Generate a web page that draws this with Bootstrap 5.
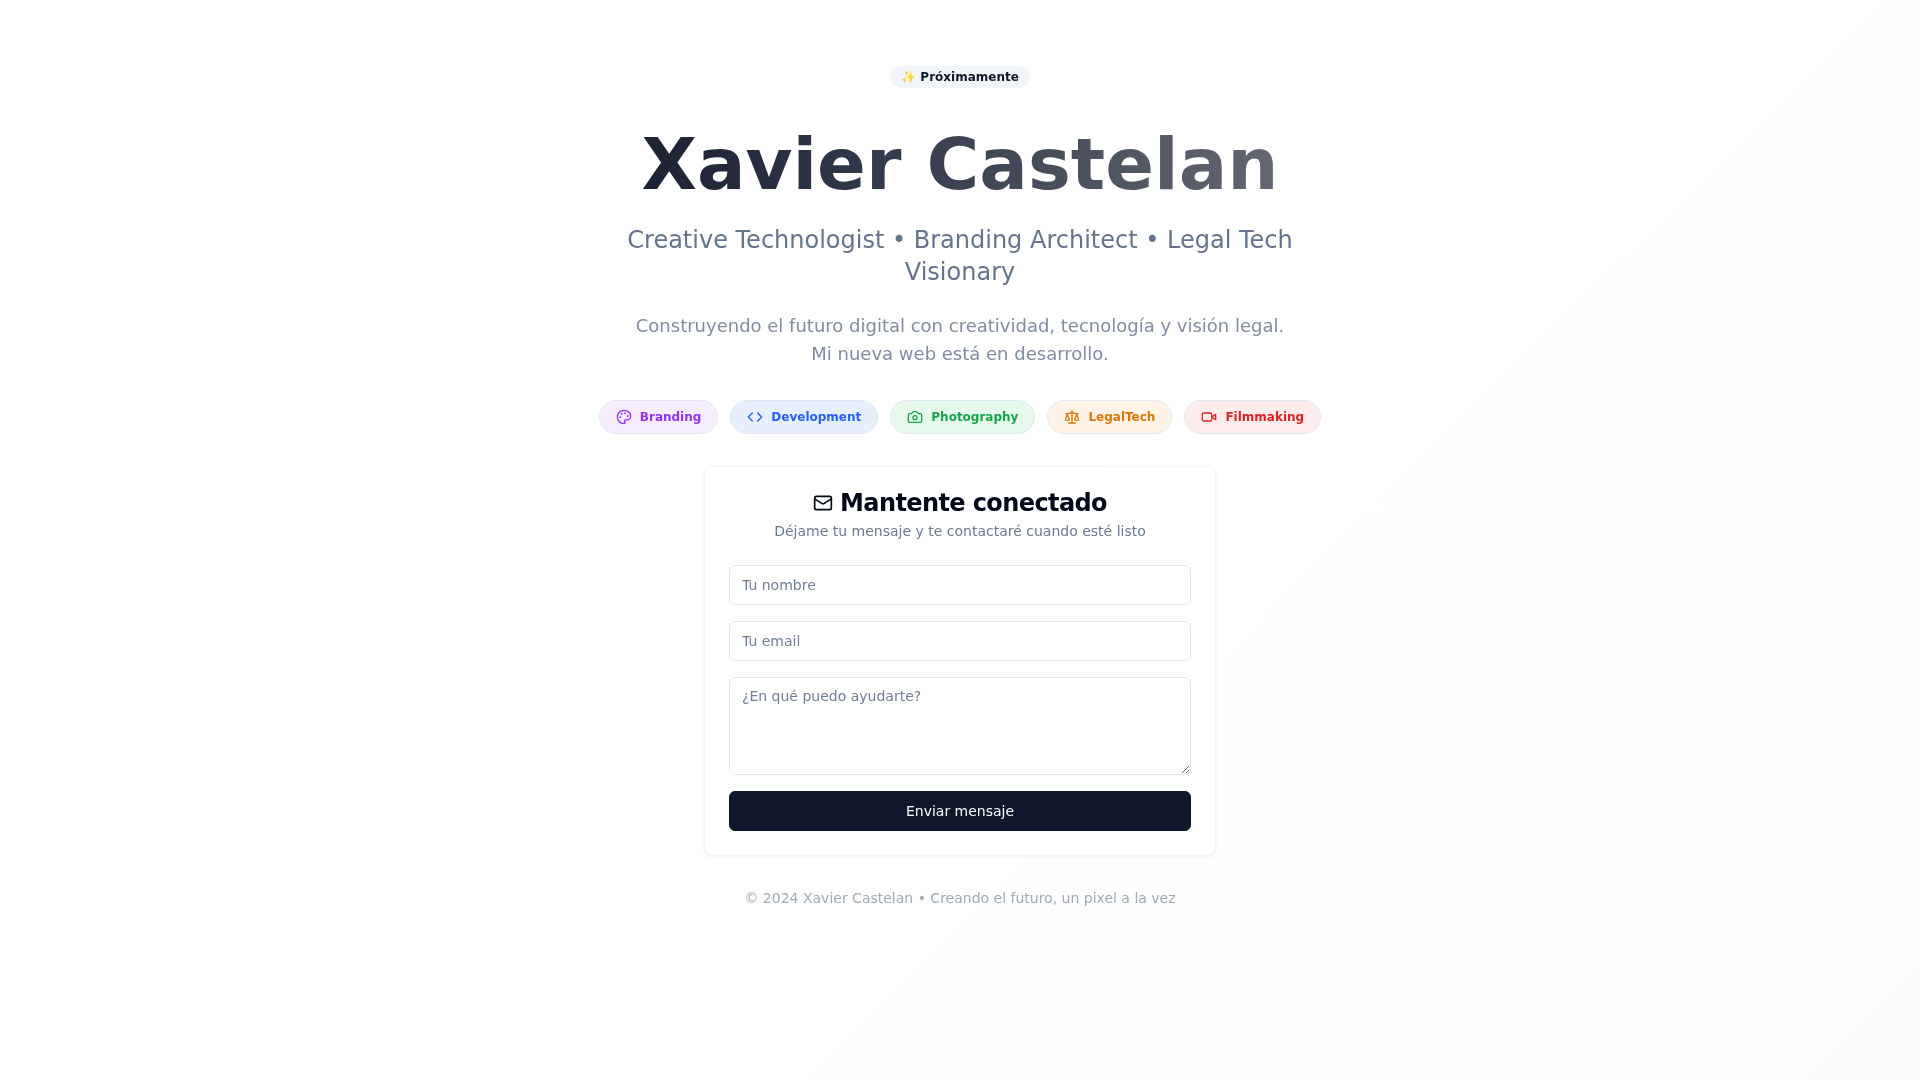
<!doctype html>
<html lang="es">
<head>
<meta charset="utf-8">
<title>Xavier Castelan</title>
<link href="https://cdn.jsdelivr.net/npm/bootstrap@5.3.0/dist/css/bootstrap.min.css" rel="stylesheet">
<style>
html, body { height: 100%; }
body {
  font-family: "DejaVu Sans", sans-serif;
  background: linear-gradient(135deg, #ffffff 0%, #ffffff 50%, #fbfcfd 100%);
  color: #0f172a;
  min-height: 1080px;
}
.page-wrap { padding-top: 66px; max-width: 896px; will-change: opacity; }
.soon-pill { background: #f1f5f9; color: #0f172a; font-size: 12px; font-weight: 700; line-height: 16px; padding: 3px 11px; border-radius: 999px; }
.hero-title {
  font-size: 72px; font-weight: 700; line-height: 72px; margin: 40px 0 24px; letter-spacing: 0;
  background: linear-gradient(90deg, #1c2233 0%, #2a3144 25%, #636772 100%);
  -webkit-background-clip: text; background-clip: text; color: transparent;
}
.hero-tag { font-size: 24px; line-height: 32px; color: #64748b; margin-bottom: 24px; max-width: 672px; }
.hero-desc { font-size: 18px; line-height: 28px; color: #808ca0; margin-bottom: 32px; max-width: 672px; }
.skill-row { gap: 12px; }
.skill-pill { display: inline-flex; align-items: center; gap: 8px; height: 34px; padding: 0 16px; border: 1px solid #e2e8f0; border-radius: 999px; font-size: 12px; font-weight: 700; line-height: 16px; }
.skill-pill svg { width: 16px; height: 16px; }
.tone-purple { background: #f5ecfe; color: #9333ea; }
.tone-blue { background: #e8effc; color: #2563eb; }
.tone-green { background: #e6f8ec; color: #16a34a; }
.tone-orange { background: #fef3e6; color: #d97706; }
.tone-red { background: #feebec; color: #dc2626; }
.contact-card { width: 512px; border: 1px solid #f1f5f9; border-radius: 8px; box-shadow: 0 1px 3px rgba(15,23,42,.06); padding: 24px; margin-top: 32px; background: #fff; }
.contact-title { font-size: 24px; font-weight: 700; line-height: 24px; letter-spacing: -.6px; color: #020817; margin: 0; }
.contact-title svg { width: 20px; height: 20px; margin-right: 7px; vertical-align: -2px; }
.contact-sub { font-size: 14px; line-height: 20px; color: #6b7a90; margin: 6px 0 24px; }
.contact-card .form-control { font-size: 14px; line-height: 20px; height: 40px; padding: 8px 12px; border: 1px solid #e2e8f0; border-radius: 6px; color: #0f172a; background: #fff; }
.contact-card .form-control::placeholder { color: #717f95; opacity: 1; }
.contact-card textarea.form-control { height: 98px; min-height: 80px; }
.send-btn { height: 40px; background: #0f172a; border-color: #0f172a; color: #f8fafc; font-size: 14px; font-weight: 400; border-radius: 6px; }
.foot-note { font-size: 14px; line-height: 20px; color: #a0aab8; margin: 32px 0 0; }
</style>
</head>
<body>
<main class="container page-wrap d-flex flex-column align-items-center text-center">
  <span class="soon-pill">✨ Próximamente</span>
  <h1 class="hero-title">Xavier Castelan</h1>
  <p class="hero-tag">Creative Technologist • Branding Architect • Legal Tech Visionary</p>
  <p class="hero-desc">Construyendo el futuro digital con creatividad, tecnología y visión legal.<br>Mi nueva web está en desarrollo.</p>
  <div class="d-flex justify-content-center skill-row">
    <span class="skill-pill tone-purple"><svg viewBox="0 0 24 24" fill="none" stroke="currentColor" stroke-width="2" stroke-linecap="round" stroke-linejoin="round"><circle cx="13.5" cy="6.5" r=".5" fill="currentColor"/><circle cx="17.5" cy="10.5" r=".5" fill="currentColor"/><circle cx="8.5" cy="7.5" r=".5" fill="currentColor"/><circle cx="6.5" cy="12.5" r=".5" fill="currentColor"/><path d="M12 2C6.5 2 2 6.5 2 12s4.5 10 10 10c.926 0 1.648-.746 1.648-1.688 0-.437-.18-.835-.437-1.125-.29-.289-.438-.652-.438-1.125a1.64 1.64 0 0 1 1.668-1.668h1.996c3.051 0 5.555-2.503 5.555-5.554C21.965 6.012 17.461 2 12 2z"/></svg>Branding</span>
    <span class="skill-pill tone-blue"><svg viewBox="0 0 24 24" fill="none" stroke="currentColor" stroke-width="2" stroke-linecap="round" stroke-linejoin="round"><polyline points="16 18 22 12 16 6"/><polyline points="8 6 2 12 8 18"/></svg>Development</span>
    <span class="skill-pill tone-green"><svg viewBox="0 0 24 24" fill="none" stroke="currentColor" stroke-width="2" stroke-linecap="round" stroke-linejoin="round"><path d="M14.5 4h-5L7 7H4a2 2 0 0 0-2 2v9a2 2 0 0 0 2 2h16a2 2 0 0 0 2-2V9a2 2 0 0 0-2-2h-3l-2.5-3z"/><circle cx="12" cy="13" r="3"/></svg>Photography</span>
    <span class="skill-pill tone-orange"><svg viewBox="0 0 24 24" fill="none" stroke="currentColor" stroke-width="2" stroke-linecap="round" stroke-linejoin="round"><path d="m16 16 3-8 3 8c-.87.65-1.92 1-3 1s-2.13-.35-3-1Z"/><path d="m2 16 3-8 3 8c-.87.65-1.92 1-3 1s-2.13-.35-3-1Z"/><path d="M7 21h10"/><path d="M12 3v18"/><path d="M3 7h2c2 0 5-1 7-2 2 1 5 2 7 2h2"/></svg>LegalTech</span>
    <span class="skill-pill tone-red"><svg viewBox="0 0 24 24" fill="none" stroke="currentColor" stroke-width="2" stroke-linecap="round" stroke-linejoin="round"><path d="m22 8-6 4 6 4V8Z"/><rect x="2" y="6" width="14" height="12" rx="2" ry="2"/></svg>Filmmaking</span>
  </div>
  <section class="contact-card">
    <h2 class="contact-title"><svg viewBox="0 0 24 24" fill="none" stroke="currentColor" stroke-width="2" stroke-linecap="round" stroke-linejoin="round"><rect x="2" y="4" width="20" height="16" rx="2"/><path d="m22 7-8.97 5.7a1.94 1.94 0 0 1-2.06 0L2 7"/></svg>Mantente conectado</h2>
    <p class="contact-sub">Déjame tu mensaje y te contactaré cuando esté listo</p>
    <form class="d-flex flex-column gap-3">
      <input class="form-control" type="text" placeholder="Tu nombre">
      <input class="form-control" type="email" placeholder="Tu email">
      <textarea class="form-control" placeholder="¿En qué puedo ayudarte?"></textarea>
      <button class="btn send-btn w-100" type="button">Enviar mensaje</button>
    </form>
  </section>
  <p class="foot-note">© 2024 Xavier Castelan • Creando el futuro, un pixel a la vez</p>
</main>
<script src="https://cdn.jsdelivr.net/npm/bootstrap@5.3.0/dist/js/bootstrap.bundle.min.js"></script>
</body>
</html>
